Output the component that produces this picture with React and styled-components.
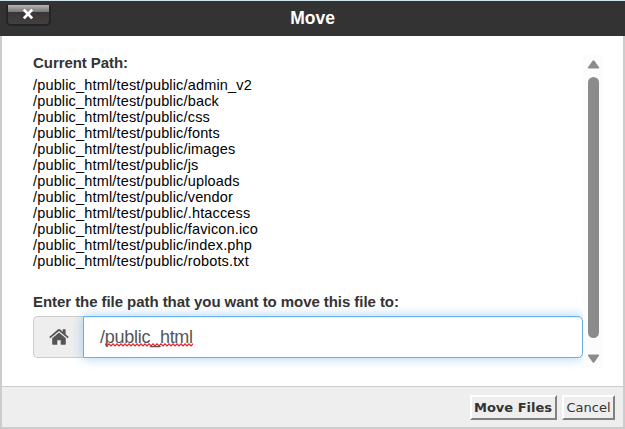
import React from "react";
import styled, { createGlobalStyle } from "styled-components";

const GlobalStyle = createGlobalStyle`
  * { box-sizing: border-box; }
  body { margin: 0; overflow: hidden; font-family: "Liberation Sans", Arial, sans-serif; }
`;

const Dialog = styled.div`
  width: 625px;
  height: 429px;
  display: flex;
  flex-direction: column;
  background: #fff;
  border-top: 1px solid #cfe3e8;
`;

const TitleBar = styled.header`
  height: 35px;
  flex: none;
  display: grid;
  grid-template-columns: 58px 1fr 58px;
  background: #333;
`;

const CloseButton = styled.button`
  width: 45px;
  height: 21px;
  margin: 4px 0 0 6px;
  padding: 0 2px 2px 0;
  display: flex;
  align-items: center;
  justify-content: center;
  border: 2px solid #20262a;
  border-top: 0;
  border-radius: 0 0 5px 5px;
  background: linear-gradient(#b5b4b4 0, #777575 7px, #3b3737 7px, #433f3f 100%);
`;

const Title = styled.h1`
  margin: 0;
  text-align: center;
  color: #fff;
  font-size: 17.5px;
  line-height: 34px;
`;

const Frame = styled.div`
  flex: 1;
  display: flex;
  flex-direction: column;
  border: 2px solid #ccc;
  border-top: 0;
`;

const Body = styled.main`
  height: 350px;
  flex: none;
  padding: 19px 20px 18px 31px;
  display: flex;
`;

const Content = styled.section`
  width: 550px;
`;

const Label = styled.div`
  color: #333;
  font-weight: bold;
  font-size: 15px;
  line-height: 16px;
  letter-spacing: -0.06px;
`;

const PathList = styled.ul`
  list-style: none;
  margin: 6px 0 25px;
  padding: 0;
  color: #000;
  font-size: 14.5px;
  line-height: 16px;
  letter-spacing: 0.16px;
`;

const InputGroup = styled.div`
  height: 42px;
  margin-top: 6px;
  display: flex;
`;

const Addon = styled.span`
  width: 50px;
  flex: none;
  display: flex;
  align-items: center;
  justify-content: center;
  padding-left: 1px;
  border: 1px solid #ccc;
  border-right: 0;
  border-radius: 5px 0 0 5px;
  background: #eee;
`;

const Field = styled.div`
  flex: 1;
  padding-left: 16px;
  border: 1px solid #66afe9;
  border-radius: 0 5px 5px 0;
  box-shadow: inset 0 1px 1px rgba(0, 0, 0, 0.075), 0 0 12px rgba(102, 175, 233, 0.6);
  background: #fff;
  color: #555;
  font-size: 18px;
  line-height: 40px;
  letter-spacing: -0.27px;
`;

const Misspelled = styled.span`
  position: relative;
  display: inline-block;
`;

const Squiggle = styled.svg`
  position: absolute;
  left: 0;
  top: 26px;
  width: 100%;
  height: 4px;
`;

const ScrollBar = styled.div`
  width: 20px;
  height: 313px;
  display: flex;
  flex-direction: column;
  align-items: center;
  padding-left: 1px;
  background: #fcfcfc;
`;

const Arrow = styled.svg`
  display: block;
  width: 13px;
  height: ${(p) => p.$height}px;
  flex: none;
`;

const Thumb = styled.div`
  width: 11px;
  height: 261px;
  flex: none;
  border-radius: 6px;
  background: #8b8b8b;
`;

const Footer = styled.footer`
  flex: 1;
  display: flex;
  justify-content: flex-end;
  align-items: flex-start;
  gap: 5px;
  padding: 8px 8px 0 0;
  border-top: 1px solid #ccc;
  background: #eee;
`;

const ActionButton = styled.button`
  width: ${(p) => p.$width}px;
  height: 25px;
  padding: 0 ${(p) => (p.$primary ? 1 : 0)}px 0 0;
  border: 2px solid;
  border-color: #fff #808080 #808080 #fff;
  background: #eee;
  color: #333;
  font: ${(p) => (p.$primary ? "bold" : "normal")} 13px/21px "DejaVu Sans", Verdana, sans-serif;
  white-space: nowrap;
`;

const paths = [
  "admin_v2", "back", "css", "fonts", "images", "js",
  "uploads", "vendor", ".htaccess", "favicon.ico", "index.php", "robots.txt",
];

export default function App() {
  return (
    <>
      <GlobalStyle />
      <Dialog>
        <TitleBar>
          <CloseButton aria-label="Close">
            <svg width="12" height="12" viewBox="0 0 12 12">
              <path d="M1.8 1.6L10.2 10.4M10.2 1.6L1.8 10.4" stroke="#fff" strokeWidth="2.8" />
            </svg>
          </CloseButton>
          <Title>Move</Title>
        </TitleBar>
        <Frame>
          <Body>
            <Content>
              <Label>Current Path:</Label>
              <PathList>
                {paths.map((name) => (
                  <li key={name}>/public_html/test/public/{name}</li>
                ))}
              </PathList>
              <Label>Enter the file path that you want to move this file to:</Label>
              <InputGroup>
                <Addon>
                  <svg width="20" height="18" viewBox="0 0 20 18" fill="#555">
                    <path d="M10 4.6L3.2 10.2V15.9Q3.2 16.7 4 16.7H8.3V12.2H11.7V16.7H16Q16.8 16.7 16.8 15.9V10.2Z" />
                    <path d="M.2 9L8.8 1.6Q10 .6 11.2 1.6L13.7 3.8V1.2H16.6V6.2L19.8 9L18.7 10.3L10 3.1L1.3 10.3Z" />
                  </svg>
                </Addon>
                <Field>
                  /
                  <Misspelled>
                    public_html
                    <Squiggle>
                      <defs>
                        <pattern id="wave" width="4" height="4" patternUnits="userSpaceOnUse">
                          <path d="M-1 .5L0 .8L2 2.8L4 .8L5 .5" fill="none" stroke="#e8202c" strokeWidth="1.2" />
                        </pattern>
                      </defs>
                      <rect width="100%" height="4" fill="url(#wave)" />
                    </Squiggle>
                  </Misspelled>
                </Field>
              </InputGroup>
            </Content>
            <ScrollBar>
              <Arrow $height={22} viewBox="0 0 13 22">
                <path d="M5.6 5.8Q6.5 4.6 7.4 5.8L12 12.3Q12.2 13.5 11.2 13.5H1.8Q.8 13.5 1 12.3Z" fill="#8b8b8b" />
              </Arrow>
              <Thumb />
              <Arrow $height={30} viewBox="0 0 13 30">
                <path d="M5.6 24.2Q6.5 25.4 7.4 24.2L12 17.7Q12.2 16.5 11.2 16.5H1.8Q.8 16.5 1 17.7Z" fill="#8b8b8b" />
              </Arrow>
            </ScrollBar>
          </Body>
          <Footer>
            <ActionButton $primary $width={87}>Move Files</ActionButton>
            <ActionButton $width={53}>Cancel</ActionButton>
          </Footer>
        </Frame>
      </Dialog>
    </>
  );
}
